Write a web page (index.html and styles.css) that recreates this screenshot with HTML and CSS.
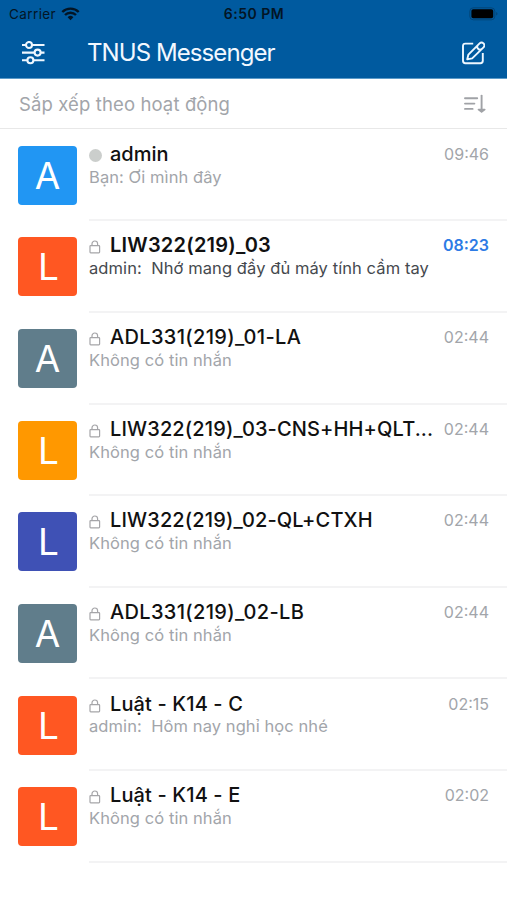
FILE: index.html
```html
<!DOCTYPE html>
<html lang="vi">
<head>
<meta charset="utf-8">
<title>TNUS Messenger</title>
<link rel="stylesheet" href="styles.css">
</head>
<body>
<svg width="0" height="0" class="defs">
  <symbol id="lock" viewBox="0 0 12 14">
    <rect x="1" y="5.6" width="9.6" height="7.2" rx=".7"/>
    <path d="M3 5.6V3.8a2.8 2.8 0 0 1 5.6 0v1.8"/>
  </symbol>
</svg>
<header class="top">
  <div class="status">
    <span class="carrier">Carrier
      <svg class="wifi" width="19" height="14" viewBox="0 0 19 14"><path d="M1.3 5a11.7 11.7 0 0 1 16.4 0" /><path d="M4 8a7.8 7.8 0 0 1 11 0"/><path class="solid" d="M9.5 13.3 6.6 10.3a4.1 4.1 0 0 1 5.8 0z"/></svg>
    </span>
    <span class="clock">6:50 PM</span>
    <svg class="battery" width="30" height="14" viewBox="0 0 30 14"><rect class="shell" x=".8" y=".8" width="25" height="12" rx="3.5"/><rect x="2.4" y="2.3" width="21.8" height="9" rx="1.8"/><path class="tip" d="M27.2 5v3.6q1.3-.5 1.3-1.8T27.2 5z"/></svg>
  </div>
  <div class="nav">
    <svg class="sliders" width="24" height="24" viewBox="0 0 24 24"><path d="M1 4h4M11 4h12.5M1 11.6h12.6M19.6 11.6h3.9M1 19.2h5.4M12.4 19.2h11.1"/><circle cx="8" cy="4" r="3"/><circle cx="16.6" cy="11.6" r="3"/><circle cx="9.4" cy="19.2" r="3"/></svg>
    <h1>TNUS Messenger</h1>
    <svg class="compose" width="24" height="24" viewBox="0 0 24 24"><path d="M12.2 2.6H4.4Q2 2.6 2 5v14.8q0 2.4 2.4 2.4h15q2.4 0 2.4-2.4V12"/><path d="M6.2 18.4 7.4 13.6 18.6 2.4a2.75 2.75 0 0 1 3.9 3.9L11.2 17.4zM16.8 4.2a2.8 2.8 0 0 0 3.9 3.9"/></svg>
  </div>
</header>
<div class="sort">
  <span>Sắp xếp theo hoạt động</span>
  <svg width="24" height="22" viewBox="0 0 24 22"><path d="M2 5.3h12.2M2 10.6h9.4M2 15.9h7.6"/><path d="M18.6 2.6v15.6"/><path class="head" d="M15.6 16.6l3 2.2 3-2.2z"/></svg>
</div>
<main>
  <article class="row"><div class="avatar blue">A</div><div class="body"><div class="line"><i class="dot"></i><h2 class="short">admin</h2><time>09:46</time></div><p>Bạn: Ơi mình đây</p></div></article>
  <article class="row unread"><div class="avatar red el">L</div><div class="body"><div class="line"><svg class="lock"><use href="#lock"/></svg><h2>LIW322(219)_03</h2><time>08:23</time></div><p>admin:&nbsp; Nhớ mang đầy đủ máy tính cầm tay</p></div></article>
  <article class="row"><div class="avatar slate">A</div><div class="body"><div class="line"><svg class="lock"><use href="#lock"/></svg><h2 class="wide">ADL331(219)_01-LA</h2><time>02:44</time></div><p>Không có tin nhắn</p></div></article>
  <article class="row"><div class="avatar orange el">L</div><div class="body"><div class="line"><svg class="lock"><use href="#lock"/></svg><h2>LIW322(219)_03-CNS+HH+QLT...</h2><time>02:44</time></div><p>Không có tin nhắn</p></div></article>
  <article class="row"><div class="avatar indigo el">L</div><div class="body"><div class="line"><svg class="lock"><use href="#lock"/></svg><h2>LIW322(219)_02-QL+CTXH</h2><time>02:44</time></div><p>Không có tin nhắn</p></div></article>
  <article class="row"><div class="avatar slate">A</div><div class="body"><div class="line"><svg class="lock"><use href="#lock"/></svg><h2 class="wide">ADL331(219)_02-LB</h2><time>02:44</time></div><p>Không có tin nhắn</p></div></article>
  <article class="row"><div class="avatar red el">L</div><div class="body"><div class="line"><svg class="lock"><use href="#lock"/></svg><h2>Luật - K14 - C</h2><time>02:15</time></div><p>admin:&nbsp; Hôm nay nghỉ học nhé</p></div></article>
  <article class="row"><div class="avatar red el">L</div><div class="body"><div class="line"><svg class="lock"><use href="#lock"/></svg><h2>Luật - K14 - E</h2><time>02:02</time></div><p>Không có tin nhắn</p></div></article>
</main>
</body>
</html>
```
FILE: styles.css
```css
* { box-sizing: border-box; margin: 0; padding: 0; }
body { background: #fff; font-family: Inter, "Liberation Sans", sans-serif; width: 507px; height: 900px; overflow: hidden; }
svg { display: block; fill: none; flex: none; }
.defs { height: 0; }
.top { height: 79px; background: #005a9f; border-bottom: 1px solid #5c9bc9; }
.status { height: 27px; padding: 0 8px 0 9px; display: grid; grid-template-columns: 1fr auto 1fr; align-items: center; color: #031525; }
.carrier { display: flex; gap: 5px; align-items: center; font-size: 13.5px; letter-spacing: .4px; }
.wifi { stroke: #031525; stroke-width: 2.4; }
.wifi .solid { fill: #031525; stroke: none; }
.clock { font-size: 14px; font-weight: 600; letter-spacing: .5px; }
.battery { justify-self: end; fill: #000; }
.battery .shell { fill: none; stroke: #034577; stroke-width: 1; }
.battery .tip { fill: #034577; }
.nav { height: 51px; padding: 0 22px 0 21px; display: flex; align-items: center; }
.sliders, .compose { stroke: #eef7ff; stroke-width: 2.1; stroke-linejoin: round; }
.compose { stroke-width: 1.9; }
.nav h1 { flex: 1; margin-left: 42px; color: #f2f8ff; font-size: 24px; font-weight: 400; letter-spacing: -.92px; }
.sort { height: 50px; border-bottom: 1px solid #e8e8e8; padding: 0 20px 0 19px; display: flex; align-items: center; justify-content: space-between; color: #a2a5aa; font-size: 18.5px; letter-spacing: .12px; }
.sort svg { stroke: #a0a2a6; stroke-width: 1.9; stroke-linecap: round; stroke-linejoin: round; }
.sort .head { fill: #a0a2a6; }
main { padding-top: .6px; }
.row { height: 91.65px; padding-left: 18px; display: flex; }
.avatar { width: 59px; height: 59px; margin: 16.2px 12px 0 0; flex: none; border-radius: 4px; color: #fff; font-size: 37px; line-height: 59px; text-align: center; }
.el { padding-left: 2px; }
.blue { background: #2196f3; }
.red { background: #ff5722; }
.slate { background: #607d8b; }
.orange { background: #ff9800; }
.indigo { background: #3f51b5; }
.body { flex: 1; min-width: 0; padding: 11.5px 18px 0 0; border-bottom: 2px solid #f3f3f4; }
.line { height: 25.5px; display: flex; align-items: center; }
.dot { width: 13px; height: 13px; border-radius: 50%; background: #cbcecc; margin: 3px 8px 0 0; flex: none; }
.lock { width: 12px; height: 14px; margin: 4px 9px 0 0; stroke: #a5a5a8; stroke-width: 1.2; }
h2 { flex: 1; min-width: 0; white-space: nowrap; font-size: 20px; font-weight: 500; letter-spacing: .13px; color: #111; }
h2.wide { letter-spacing: .33px; }
h2.short { letter-spacing: 0; }
time { font-size: 16px; color: #a2a5aa; }
p { font-size: 16.5px; line-height: 21px; letter-spacing: .08px; color: #a2a5aa; white-space: nowrap; }
.unread h2 { font-weight: 600; letter-spacing: .22px; }
.unread time { font-weight: 600; color: #2d7be5; }
.unread p { color: #45494e; }
```
